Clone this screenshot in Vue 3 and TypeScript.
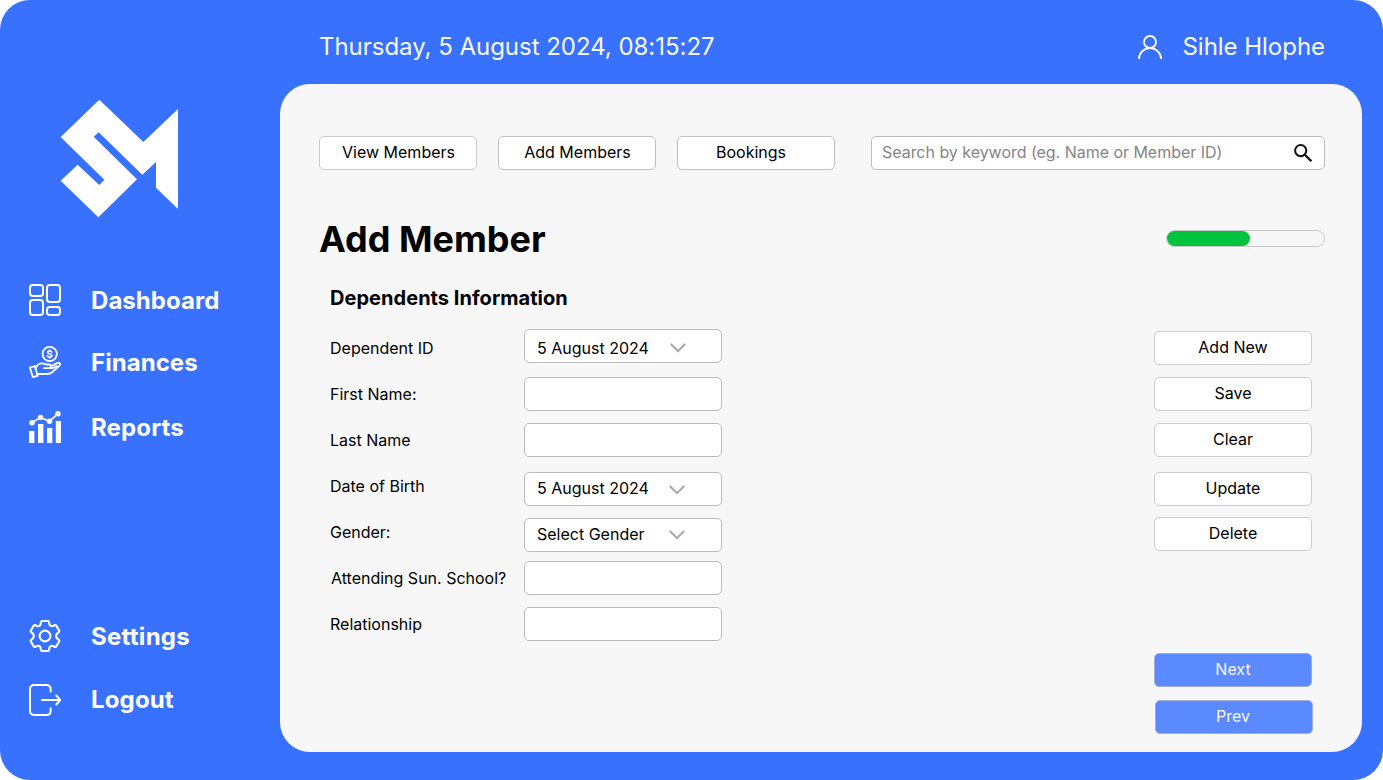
<script setup lang="ts">
import { ref } from 'vue'

interface NavItem { label: string; icon: string }
interface Field { kind: 'select' | 'text'; value: string; name: string }

const mainNav: NavItem[] = [
  { label: 'Dashboard', icon: 'dashboard' },
  { label: 'Finances', icon: 'finances' },
  { label: 'Reports', icon: 'reports' },
]
const footNav: NavItem[] = [
  { label: 'Settings', icon: 'settings' },
  { label: 'Logout', icon: 'logout' },
]
const tabs: string[] = ['View Members', 'Add Members', 'Bookings']
const labels: string[] = [
  'Dependent ID',
  'First Name:',
  'Last Name',
  'Date of Birth',
  'Gender:',
  'Attending Sun. School?',
  'Relationship',
]
const fields = ref<Field[]>([
  { kind: 'select', value: '5 August 2024', name: 'dependent' },
  { kind: 'text', value: '', name: 'first' },
  { kind: 'text', value: '', name: 'last' },
  { kind: 'select', value: '5 August 2024', name: 'birth' },
  { kind: 'select', value: 'Select Gender', name: 'gender' },
  { kind: 'text', value: '', name: 'school' },
  { kind: 'text', value: '', name: 'relation' },
])
const actions: string[] = ['Add New', 'Save', 'Clear', 'Update', 'Delete']
const search = ref('')
const progress = 53
</script>

<template>
  <div class="app">
    <aside class="sidebar">
      <svg class="logo" viewBox="60 57 357 357" fill="#fff">
        <path d="M178 59L310 186L414 87V387L348 323V246L307 284L176 157L161 170L291 298L175 412L62 302L113 254L178 315L193 299L62 171Z" />
      </svg>
      <nav class="nav">
        <a v-for="item in mainNav" :key="item.label" class="nav-item" :class="item.icon">
          <svg v-if="item.icon === 'dashboard'" class="nav-icon" viewBox="0 0 32 32" fill="none" stroke="#fff" stroke-width="2">
            <rect x="1" y="1" width="13" height="11" rx="2.8" />
            <rect x="18" y="1" width="13" height="17" rx="2.8" />
            <rect x="1" y="16" width="13" height="15" rx="2.8" />
            <rect x="18" y="23" width="13" height="8" rx="2.8" />
          </svg>
          <svg v-else-if="item.icon === 'finances'" class="nav-icon" viewBox="0 0 32 32" fill="none" stroke="#fff" stroke-width="1.8" stroke-linecap="round" stroke-linejoin="round">
            <circle cx="20.7" cy="8" r="7.1" />
            <path d="M22.7 6.1C22.3 5.3 21.6 5 20.7 5C19.5 5 18.7 5.6 18.7 6.5C18.7 8.5 22.8 7.4 22.8 9.5C22.8 10.5 21.9 11 20.7 11C19.6 11 18.9 10.6 18.5 9.8M20.7 4V5M20.7 11V12" stroke-width="1.7" />
            <path d="M.9 21.5L6 20.2L8.6 29.8L3.8 31.1Z" />
            <path d="M6.5 22.2C8 19 10.8 17 13.8 17.4C15.3 17.6 16.3 18.5 17.6 18.5H20.2C22.7 18.5 22.4 22.1 20 22.1H14.8M22 20.3L28 17.1C30.5 15.8 32.2 18.1 30.2 19.8L23.4 26C21.8 27.4 20 28 18 28H8.3M21.8 22H24L27.5 20" />
          </svg>
          <svg v-else class="nav-icon" viewBox="0 0 32 32" fill="#fff">
            <path d="M0 20H5.4V32H0ZM9 13H14.4V32H9ZM18 17H23.3V32H18ZM26.8 10H32V32H26.8Z" />
            <path d="M3 11.7L11.5 6.4L20.5 10.2L29 2.7" fill="none" stroke="#fff" stroke-width="1.7" />
            <circle cx="3" cy="11.7" r="2.7" />
            <circle cx="11.5" cy="6.4" r="2.7" />
            <circle cx="20.5" cy="10.2" r="2.7" />
            <circle cx="29" cy="2.7" r="2.7" />
          </svg>
          <span>{{ item.label }}</span>
        </a>
      </nav>
      <nav class="nav foot">
        <a v-for="item in footNav" :key="item.label" class="nav-item" :class="item.icon">
          <svg v-if="item.icon === 'settings'" class="nav-icon" viewBox="0 0 32 32" fill="none" stroke="#fff" stroke-width="2.1" stroke-linejoin="round">
            <circle cx="16" cy="16" r="5.4" />
            <path d="M13.2 1H18.8C19.8 1 20.1 1.6 20.2 2.5L20.4 4.3Q20.6 5.4 21.6 5.9Q22.7 6.5 23.8 6L25.5 5.3C26.3 5 26.9 5.1 27.4 5.9L30 10.3C30.5 11.2 30.3 11.8 29.6 12.4L28.1 13.6Q27.2 14.5 27.2 16Q27.2 17.5 28.1 18.4L29.6 19.6C30.3 20.2 30.5 20.8 30 21.7L27.4 26.1C26.9 26.9 26.3 27 25.5 26.7L23.8 26Q22.7 25.5 21.6 26.1Q20.6 26.6 20.4 27.7L20.2 29.5C20.1 30.4 19.8 31 18.8 31H13.2C12.2 31 11.9 30.4 11.8 29.5L11.6 27.7Q11.4 26.6 10.4 26.1Q9.3 25.5 8.2 26L6.5 26.7C5.7 27 5.1 26.9 4.6 26.1L2 21.7C1.5 20.8 1.7 20.2 2.4 19.6L3.9 18.4Q4.8 17.5 4.8 16Q4.8 14.5 3.9 13.6L2.4 12.4C1.7 11.8 1.5 11.2 2 10.3L4.6 5.9C5.1 5.1 5.7 5 6.5 5.3L8.2 6Q9.3 6.5 10.4 5.9Q11.4 5.4 11.6 4.3L11.8 2.5C11.9 1.6 12.2 1 13.2 1Z" />
          </svg>
          <svg v-else class="nav-icon" viewBox="0 0 32 32" fill="none" stroke="#fff" stroke-width="2" stroke-linecap="round" stroke-linejoin="round">
            <path d="M21.6 7.6V5C21.6 2.7 20 1 17.7 1H5C2.7 1 1 2.7 1 5V27C1 29.3 2.7 31 5 31H17.7C20 31 21.6 29.3 21.6 27V24.3" />
            <path d="M13 16H31M27.3 11.5L31.2 16L27.3 20.5" />
          </svg>
          <span>{{ item.label }}</span>
        </a>
      </nav>
    </aside>

    <div class="content">
      <header class="topbar">
        <span class="date">Thursday, 5 August 2024, 08:15:27</span>
        <div class="user">
          <svg class="user-icon" viewBox="0 0 24 24" fill="none" stroke="#fff" stroke-width="1.8">
            <circle cx="12" cy="7" r="6" />
            <path d="M.9 24C.9 18 5.8 13.1 12 13.1S23.1 18 23.1 24" />
          </svg>
          <span>Sihle Hlophe</span>
        </div>
      </header>

      <main class="panel">
        <div class="toolbar">
          <button v-for="tab in tabs" :key="tab" class="btn tab" :class="tab.toLowerCase().replace(' ', '-')">{{ tab }}</button>
          <label class="search">
            <input v-model="search" placeholder="Search by keyword (eg. Name or Member ID)" />
            <svg class="search-icon" viewBox="0 0 18 18" fill="none" stroke="#111" stroke-width="2">
              <circle cx="6.7" cy="6.6" r="5.6" />
              <path d="M10.8 10.7L17.3 17.2" stroke-width="2.2" />
            </svg>
          </label>
        </div>

        <div class="heading">
          <h1>Add Member</h1>
          <div class="progress"><div class="bar" :style="{ width: progress + '%' }"></div></div>
        </div>

        <h2>Dependents Information</h2>

        <div class="form">
          <div class="labels">
            <span v-for="label in labels" :key="label" :class="{ inset: label.startsWith('Attending') }">{{ label }}</span>
          </div>
          <div class="fields">
            <div v-for="field in fields" :key="field.name" class="field" :class="field.name">
              <template v-if="field.kind === 'select'">
                <span class="value">{{ field.value }}</span>
                <svg class="chevron" viewBox="0 0 16 10" fill="none" stroke="#a6a6a6" stroke-width="2">
                  <path d="M.8 1L8 8.2L15.2 1" />
                </svg>
              </template>
              <input v-else v-model="field.value" />
            </div>
          </div>
          <div class="actions">
            <button v-for="action in actions" :key="action" class="btn" :class="action.toLowerCase().replace(' ', '-')">{{ action }}</button>
            <button class="btn primary next">Next</button>
            <button class="btn primary prev">Prev</button>
          </div>
        </div>
      </main>
    </div>
  </div>
</template>

<style>
body { margin: 0; background: #fff; }
</style>

<style scoped>
* { box-sizing: border-box; }
.app {
  display: flex;
  width: 1383px;
  height: 780px;
  overflow: hidden;
  border-radius: 30px;
  background: #3971ff;
  color: #000;
  font-family: Inter, "Liberation Sans", sans-serif;
  font-size: 16px;
  white-space: nowrap;
}
.sidebar { width: 280px; padding-top: 99px; }
.logo { display: block; width: 119px; height: 119px; margin-left: 60px; }
.nav { display: flex; flex-direction: column; padding: 66px 0 0 29px; }
.nav.foot { padding-top: 177px; }
.nav-item {
  display: flex;
  gap: 30px;
  height: 32px;
  color: #fff;
  font-size: 24px;
  font-weight: 700;
  line-height: 34px;
  letter-spacing: 0.05px;
}
.nav-item.finances { margin-top: 30px; }
.nav-item.reports { margin-top: 33px; letter-spacing: 0.15px; }
.nav-item.logout { margin-top: 32px; line-height: 32px; letter-spacing: 0.15px; }
.nav-item.settings { letter-spacing: 0.28px; }
.nav-icon { width: 32px; height: 32px; flex: none; }
.content { width: 1082px; }
.topbar {
  display: flex;
  justify-content: space-between;
  height: 84px;
  padding: 32px 37px 0 39px;
  color: #f7f7f7;
  font-size: 24px;
  font-weight: 400;
  line-height: 30px;
  letter-spacing: -0.03px;
}
.user { display: flex; }
.user-icon { width: 24px; height: 24px; margin: 3px 20px 0 0; }
.panel {
  height: 668px;
  padding: 52px 37px 0 39px;
  border-radius: 30px;
  background: #f7f7f7;
}
.toolbar { display: flex; }
.btn {
  display: block;
  width: 158px;
  height: 34px;
  padding: 0 0 2px;
  border: 1px solid #ccc;
  border-radius: 5px;
  background: #fff;
  color: #000;
  font: inherit;
  line-height: 20px;
  text-align: center;
}
.tab { margin-right: 21px; padding-left: 1px; border-color: #c0c0c0; }
.tab:first-child { border-color: #ccc; }
.bookings { padding: 0 10px 2px 0; }
.search {
  display: flex;
  width: 454px;
  height: 34px;
  margin-left: 15px;
  padding: 0 12px 0 10px;
  border: 1px solid #bcbcbc;
  border-radius: 5px;
  background: #fff;
}
input {
  flex: 1;
  min-width: 0;
  padding: 0 0 2px;
  border: 0;
  outline: 0;
  background: transparent;
  font: inherit;
}
input::placeholder { color: #858585; opacity: 1; letter-spacing: -0.03px; }
.search-icon { width: 18px; height: 18px; margin-top: 7px; }
.heading { display: flex; justify-content: space-between; margin-top: 46px; height: 46px; }
h1 { margin: 0; font-size: 36px; font-weight: 700; line-height: 46px; }
.progress {
  width: 159px;
  height: 17px;
  margin-top: 14px;
  border: 1px solid #c8c8c8;
  border-radius: 9px;
}
.bar { height: 15px; border-radius: 8px; background: #00c43d; }
h2 { margin: 24px 0 0 11px; font-size: 20px; font-weight: 700; line-height: 24px; letter-spacing: 0.04px; }
.form { display: flex; padding-left: 11px; }
.labels { width: 194px; margin-top: 15px; }
.labels span { display: block; height: 46px; line-height: 46px; }
.labels .inset { padding-left: 1px; }
.fields { width: 198px; margin-top: 19px; }
.field {
  display: flex;
  align-items: center;
  height: 34px;
  margin-top: 12px;
  padding: 0 12px;
  border: 1px solid #bcbcbc;
  border-radius: 5px;
  background: #fff;
}
.field.dependent { margin-top: 0; padding-top: 4px; }
.field.first { margin-top: 14px; }
.field.birth { margin-top: 15px; }
.field.birth, .field.gender { padding-bottom: 2px; }
.field.school { margin-top: 9px; }
.value { width: 132px; line-height: 20px; }
.chevron { width: 16px; height: 10px; margin-top: 3px; }
.gender .chevron { margin-top: 1px; }
.dependent .value { width: 133px; }
.dependent .chevron { margin-top: -1px; }
.actions { margin: 21px 0 0 432px; }
.actions .btn { margin-top: 12px; }
.actions .add-new { margin-top: 0; }
.actions .update { margin-top: 15px; }
.actions .delete { margin-top: 11px; }
.actions .primary { border-color: #a3afcf; background: #5b89ff; color: #f7f7f7; }
.actions .next { margin-top: 102px; }
.actions .prev { margin: 13px 0 0 1px; padding-right: 2px; }
</style>
